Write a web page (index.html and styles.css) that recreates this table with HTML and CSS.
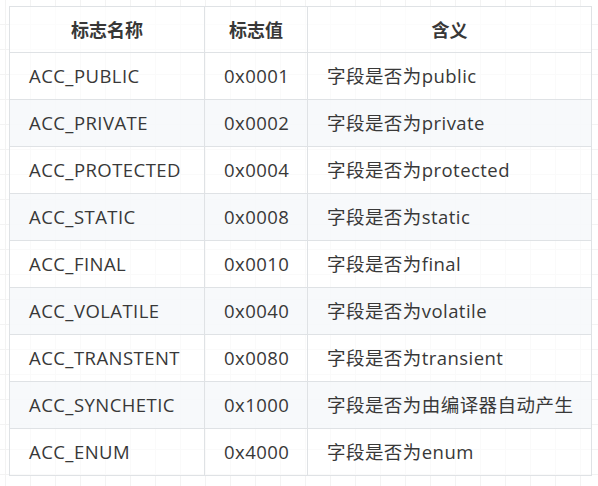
FILE: index.html
```html
<!DOCTYPE html>
<html lang="zh">
<head>
<meta charset="utf-8">
<link rel="stylesheet" href="styles.css">
</head>
<body>
<div class="page">
<table class="flags">
<colgroup><col class="c1"><col class="c2"><col class="c3"></colgroup>
<thead>
<tr><th>标志名称</th><th>标志值</th><th>含义</th></tr>
</thead>
<tbody>
<tr><td>ACC_PUBLIC</td><td>0x0001</td><td>字段是否为public</td></tr>
<tr><td>ACC_PRIVATE</td><td>0x0002</td><td>字段是否为private</td></tr>
<tr><td>ACC_PROTECTED</td><td>0x0004</td><td>字段是否为protected</td></tr>
<tr><td>ACC_STATIC</td><td>0x0008</td><td>字段是否为static</td></tr>
<tr><td>ACC_FINAL</td><td>0x0010</td><td>字段是否为final</td></tr>
<tr><td>ACC_VOLATILE</td><td>0x0040</td><td>字段是否为volatile</td></tr>
<tr><td>ACC_TRANSTENT</td><td>0x0080</td><td>字段是否为transient</td></tr>
<tr><td>ACC_SYNCHETIC</td><td>0x1000</td><td>字段是否为由编译器自动产生</td></tr>
<tr><td>ACC_ENUM</td><td>0x4000</td><td>字段是否为enum</td></tr>
</tbody>
</table>
</div>
</body>
</html>
```
FILE: styles.css
```css
html, body {
  margin: 0;
  padding: 0;
}
body {
  width: 598px;
  height: 486px;
  overflow: hidden;
  background-color: #fff;
  background-image:
    linear-gradient(to right, #f3f3f3 1px, transparent 1px),
    linear-gradient(to bottom, #f3f3f3 1px, transparent 1px);
  background-size: 25px 25px;
  background-position: 5px 24px;
  font-family: "Open Sans", "Noto Sans CJK SC", sans-serif;
  color: #383838;
}
.page {
  padding: 6px 0 0 9px;
}
.flags {
  border-collapse: collapse;
  table-layout: fixed;
  width: 582px;
  font-size: 18.5px;
  letter-spacing: 0.45px;
}
.c1 { width: 195px; }
.c2 { width: 103px; }
.c3 { width: 284px; }
.flags th, .flags td {
  border: 1px solid #dfe2e5;
  padding: 0 0 0 19px;
  text-align: left;
  white-space: nowrap;
  line-height: 24px;
}
.flags th {
  height: 45px;
  font-weight: bold;
  text-align: center;
  padding: 0;
  letter-spacing: 0;
  font-size: 18px;
  background: rgba(255,255,255,0.75);
}
.flags td {
  height: 46px;
  background: rgba(255,255,255,0.6);
}
.flags tbody tr:nth-child(even) td {
  background: rgba(246,248,250,0.85);
}
```
